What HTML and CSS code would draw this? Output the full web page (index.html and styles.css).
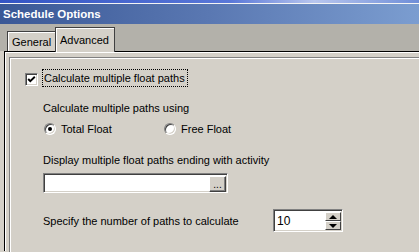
FILE: index.html
```html
<!DOCTYPE html>
<html lang="en">
<head>
    <meta charset="UTF-8">
    <title>Schedule Options</title>
    <link rel="stylesheet" href="styles.css">
</head>
<body>
    <div class="top-strip"></div>
    <div class="title-bar">Schedule Options</div>

    <div class="tab-strip">
        <div class="tab">General</div>
        <div class="tab active">Advanced</div>
    </div>

    <div class="panel">
        <div class="frame">
            <div class="check-row">
                <span class="checkbox">
                    <svg width="9" height="9" viewBox="0 0 9 9"><polyline points="1.2,4 3.3,6.2 7.8,1.8" fill="none" stroke="#000" stroke-width="1.9"/></svg>
                </span>
                <span class="focus-label">Calculate multiple float paths</span>
            </div>

            <div class="section">
                <p class="caption using">Calculate multiple paths using</p>
                <div class="radio-row">
                    <label class="radio-option total"><span class="radio checked"></span>Total Float</label>
                    <label class="radio-option"><span class="radio"></span>Free Float</label>
                </div>

                <p class="caption ending">Display multiple float paths ending with activity</p>
                <div class="picker">
                    <div class="picker-field"></div>
                    <div class="picker-btn">...</div>
                </div>

                <div class="count-row">
                    <span class="count-label">Specify the number of paths to calculate</span>
                    <div class="spinner">
                        <div class="spinner-value">10</div>
                        <div class="spinner-btns">
                            <div class="spin-btn"><span class="arrow-up"></span></div>
                            <div class="spin-btn"><span class="arrow-down"></span></div>
                        </div>
                    </div>
                </div>
            </div>
        </div>
    </div>
</body>
</html>
```

FILE: styles.css
```css
* {
    margin: 0;
    padding: 0;
    box-sizing: border-box;
}
body {
    width: 419px;
    height: 252px;
    overflow: hidden;
    background: #d4d0c8;
    font-family: "Liberation Sans", Arial, sans-serif;
    font-size: 11px;
    color: #000;
}
.top-strip {
    height: 4px;
    background: linear-gradient(90deg, #3354c4, #5a78d8 55%, #b8c6ee 75%, #6f8ed8);
    border-bottom: 1px solid #f4f4f4;
}
.title-bar {
    height: 20px;
    padding-left: 3px;
    line-height: 20px;
    color: #fff;
    font-weight: bold;
    font-size: 11.5px;
    background: linear-gradient(90deg, #3a5896, #5a78b2 50%, #7b9dd0);
}
.tab-strip {
    height: 27px;
    display: flex;
    align-items: flex-end;
    padding-left: 7px;
    background: #b3b1aa;
    position: relative;
    z-index: 1;
}
.tab {
    height: 20px;
    padding: 0 4px;
    line-height: 20px;
    background: #d4d0c8;
    border: 1px solid #404040;
    border-bottom: none;
    box-shadow: inset 1px 1px #fff;
    width: 49px;
}
.tab.active {
    height: 25px;
    width: 60px;
    margin-bottom: -1px;
    margin-left: -1px;
    padding-top: 2px;
}
.panel {
    height: 200px;
    margin-left: 4px;
    padding: 5px 0 0 4px;
    border-top: 1px solid #000;
    border-left: 1px solid #000;
    box-shadow: inset 1px 1px #fff;
}
.frame {
    height: 200px;
    border-top: 1px solid #808080;
    border-left: 1px solid #808080;
    box-shadow: inset 1px 1px #fff;
}
.check-row {
    display: flex;
    align-items: flex-start;
    margin-top: 11px;
    padding-left: 15px;
}
.checkbox {
    width: 13px;
    height: 13px;
    margin-top: 4px;
    margin-right: 4px;
    background: #fff;
    border: 1px solid;
    border-color: #808080 #fff #fff #808080;
    box-shadow: inset 1px 1px #404040, inset -1px -1px #d4d0c8;
    display: flex;
    align-items: center;
    justify-content: center;
}
.focus-label {
    height: 18px;
    line-height: 16px;
    padding: 0 2px 0 1px;
    border: 1px dotted #000;
}
.section {
    padding-left: 33px;
}
.caption {
    line-height: 14px;
}
.caption.using {
    margin-top: 14px;
}
.radio-row {
    display: flex;
    margin-top: 7px;
    height: 14px;
}
.radio-option {
    display: flex;
    align-items: center;
    line-height: 14px;
}
.radio-option.total {
    width: 120px;
}
.radio {
    width: 12px;
    height: 12px;
    margin-left: 1px;
    margin-right: 5px;
    border-radius: 50%;
    background: #fff;
    border: 1px solid;
    border-color: #808080 #fff #fff #808080;
    box-shadow: inset 1px 1px #404040, inset -1px -1px #d4d0c8;
    position: relative;
}
.radio.checked::after {
    content: "";
    position: absolute;
    left: 3px;
    top: 3px;
    width: 4px;
    height: 4px;
    border-radius: 50%;
    background: #000;
}
.caption.ending {
    margin-top: 17px;
}
.picker {
    display: flex;
    width: 185px;
    height: 20px;
    margin-top: 6px;
    padding: 2px 1px 1px 2px;
    background: #fff;
    border: 1px solid;
    border-color: #808080 #fff #fff #808080;
    box-shadow: inset 1px 1px #404040, inset -1px -1px #d4d0c8;
}
.picker-field {
    flex: 1;
}
.picker-btn {
    width: 17px;
    height: 16px;
    line-height: 16px;
    text-align: center;
    background: #d4d0c8;
    border: 1px solid;
    border-color: #fff #404040 #404040 #fff;
    box-shadow: inset -1px -1px #808080;
    font-size: 10px;
}
.count-row {
    display: flex;
    align-items: center;
    margin-top: 16px;
}
.count-label {
    width: 230px;
}
.spinner {
    display: flex;
    width: 70px;
    height: 23px;
    padding: 2px 1px 1px 2px;
    background: #fff;
    border: 1px solid;
    border-color: #808080 #fff #fff #808080;
    box-shadow: inset 1px 1px #404040, inset -1px -1px #d4d0c8;
}
.spinner-value {
    flex: 1;
    padding-left: 1px;
    line-height: 18px;
    font-size: 12px;
}
.spinner-btns {
    width: 16px;
    display: flex;
    flex-direction: column;
}
.spin-btn {
    flex: 1;
    display: flex;
    align-items: center;
    justify-content: center;
    background: #d4d0c8;
    border: 1px solid;
    border-color: #fff #404040 #404040 #fff;
}
.arrow-up {
    border-left: 4px solid transparent;
    border-right: 4px solid transparent;
    border-bottom: 4px solid #000;
}
.arrow-down {
    border-left: 4px solid transparent;
    border-right: 4px solid transparent;
    border-top: 4px solid #000;
}
```
